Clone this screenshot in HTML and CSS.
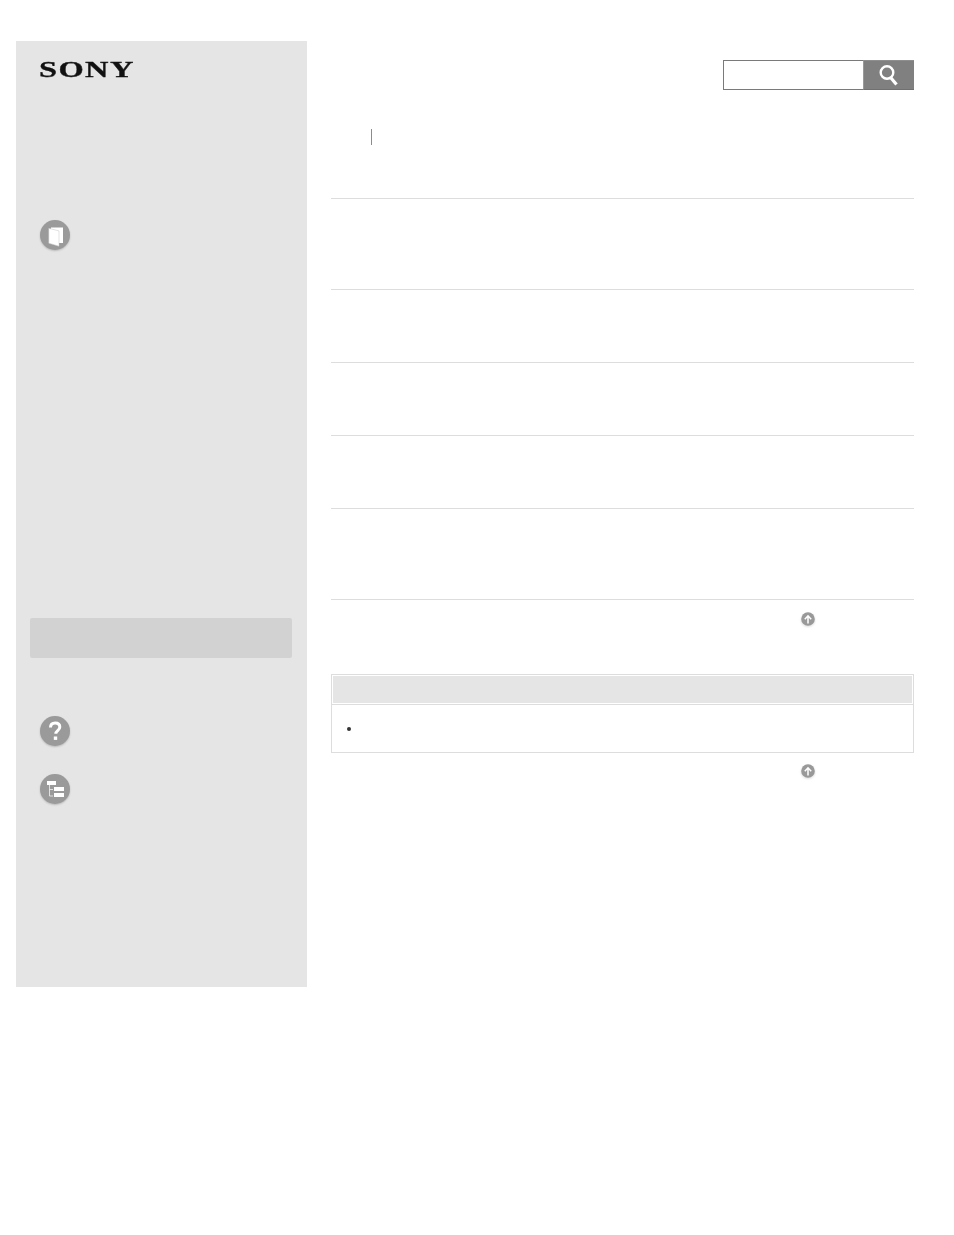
FILE: index.html
```html
<!DOCTYPE html>
<html>
  <head>
    <title>Help Guide</title>
    <link rel="stylesheet" href="styles.css">
  </head>
  <body>
    <div class="page">
      <aside class="sidebar">
        <div class="logo"><span class="logo-text">SONY</span></div>

        <div class="side-icon side-icon-book">
          <svg viewBox="0 0 30 30" width="30" height="30">
            <rect x="11" y="7.500" width="12" height="15.500" fill="#fff" />
            <path d="M8.800 8.300l10.200 2.600v15.300l-10.200-3z" fill="#fff" stroke="#c4c4c4" stroke-width="0.500" />
          </svg>
        </div>

        <div class="side-current"></div>

        <div class="side-icon side-icon-help">
          <svg viewBox="0 0 30 30" width="30" height="30">
            <path d="M10.500 11.500c0-3 2-4.500 4.700-4.500 2.800 0 4.600 1.600 4.600 4 0 3.600-4 3.600-4 6.800" fill="none" stroke="#fff" stroke-width="3" />
            <rect x="13.800" y="20.500" width="3.400" height="3.400" fill="#fff" />
          </svg>
        </div>

        <div class="side-icon side-icon-tree">
          <svg viewBox="0 0 30 30" width="30" height="30">
            <rect x="7" y="7" width="9" height="4" fill="#fff" />
            <rect x="14" y="13" width="10" height="4" fill="#fff" />
            <rect x="14" y="19" width="10" height="4" fill="#fff" />
            <path d="M9.500 11v11H13M9.500 15.500H13" fill="none" stroke="#f2f2f2" stroke-width="0.800" />
          </svg>
        </div>
      </aside>

      <main class="content">
        <div class="search-bar">
          <div class="search-input"></div>
          <div class="search-button">
            <svg viewBox="0 0 22 24" width="22" height="24">
              <circle cx="9" cy="9.500" r="6.300" fill="none" stroke="#fff" stroke-width="2.400" />
              <path d="M13 15l5.500 6.500" fill="none" stroke="#fff" stroke-width="3.200" />
            </svg>
          </div>
        </div>

        <div class="crumb-divider"></div>

        <div class="rows">
          <div class="row row-tall"></div>
          <div class="row"></div>
          <div class="row"></div>
          <div class="row"></div>
          <div class="row row-tall"></div>
        </div>

        <div class="to-top to-top-first">
          <svg viewBox="0 0 14 14" width="14" height="14">
            <circle cx="7" cy="7" r="6.800" fill="#999" />
            <path d="M7 11.500V4M3.800 7.200L7 3.800l3.200 3.400" fill="none" stroke="#fff" stroke-width="1.500" />
          </svg>
        </div>

        <section class="note">
          <div class="note-head"></div>
          <div class="note-body">
            <span class="bullet"></span>
          </div>
        </section>

        <div class="to-top to-top-second">
          <svg viewBox="0 0 14 14" width="14" height="14">
            <circle cx="7" cy="7" r="6.800" fill="#999" />
            <path d="M7 11.500V4M3.800 7.200L7 3.800l3.200 3.400" fill="none" stroke="#fff" stroke-width="1.500" />
          </svg>
        </div>
      </main>
    </div>
  </body>
</html>
```

FILE: styles.css
```css
* {
  margin: 0;
  padding: 0;
  box-sizing: border-box;
}

body {
  background: #ffffff;
  font-family: "Liberation Sans", sans-serif;
}

.page {
  display: flex;
  gap: 24px;
  padding: 41px 40px 0 16px;
}

/* Left column */
.sidebar {
  width: 291px;
  height: 946px;
  flex-shrink: 0;
  background: #e5e5e5;
}

.logo {
  height: 16px;
  margin: 21px 0 0 23px;
  line-height: 16px;
}

.logo-text {
  display: inline-block;
  font-family: "Liberation Serif", serif;
  font-size: 23px;
  font-weight: 700;
  letter-spacing: 1px;
  color: #111111;
  -webkit-text-stroke: 0.3px #111111;
  transform: scaleX(1.41);
  transform-origin: left center;
}

.side-icon {
  width: 30px;
  height: 30px;
  margin-left: 24px;
  border-radius: 50%;
  background: #9a9a9a;
  box-shadow: 0 1px 2px rgba(0, 0, 0, 0.2);
}

.side-icon svg {
  display: block;
}

.side-icon-book {
  margin-top: 142px;
}

.side-current {
  height: 40px;
  margin: 368px 15px 0 14px;
  border-radius: 2px;
  background: #d2d2d2;
}

.side-icon-help {
  margin-top: 58px;
}

.side-icon-tree {
  margin-top: 28px;
}

/* Right column */
.content {
  width: 583px;
  flex-shrink: 0;
}

.search-bar {
  display: flex;
  justify-content: flex-end;
  margin-top: 19px;
}

.search-input {
  width: 140px;
  height: 30px;
  border: 1px solid #7a7a7a;
  border-right: none;
  background: #ffffff;
}

.search-button {
  display: flex;
  align-items: center;
  justify-content: center;
  width: 51px;
  height: 30px;
  background: #808080;
  border-top: 1px solid #8e8e8e;
  border-bottom: 1px solid #707070;
  border-left: 1px solid #9a9a9a;
}

.crumb-divider {
  width: 1px;
  height: 16px;
  margin: 39px 0 0 40px;
  background: #8c8c8c;
}

.rows {
  margin-top: 53px;
  border-bottom: 1px solid #dddddd;
}

.row {
  height: 73px;
  border-top: 1px solid #dddddd;
}

.row-tall {
  height: 91px;
}

.to-top {
  width: 14px;
  height: 14px;
  margin-left: 470px;
  filter: drop-shadow(0 1px 1px rgba(0, 0, 0, 0.15));
}

.to-top svg {
  display: block;
}

.to-top-first {
  margin-top: 12px;
}

.to-top-second {
  margin-top: 11px;
}

.note {
  height: 79px;
  margin-top: 48px;
  border: 1px solid #dddddd;
}

.note-head {
  height: 27px;
  margin: 1px 1px 0;
  background: #e5e5e5;
}

.note-body {
  height: 49px;
  margin-top: 1px;
  border-top: 1px solid #dddddd;
  padding: 22px 0 0 15px;
}

.bullet {
  display: block;
  width: 4px;
  height: 4px;
  border-radius: 50%;
  background: #333333;
}
```
